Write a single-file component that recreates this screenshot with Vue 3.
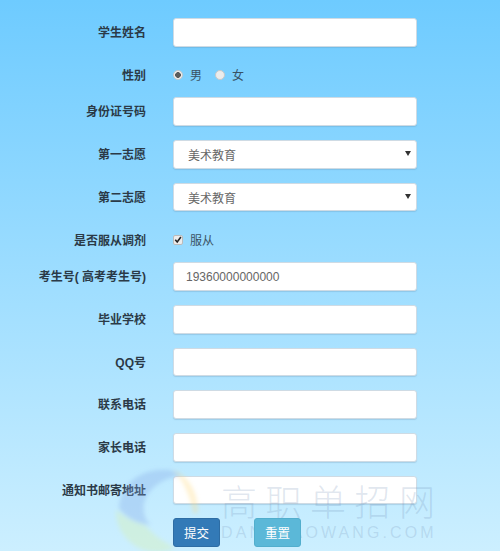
<script setup>
const topRows = [
  { label: '学生姓名', type: 'text' },
  { label: '性别', type: 'radio' },
  { label: '身份证号码', type: 'text' },
  { label: '第一志愿', type: 'select' },
  { label: '第二志愿', type: 'select' },
  { label: '是否服从调剂', type: 'check' },
  { label: '考生号( 高考考生号)', type: 'text', value: '19360000000000' },
  { label: '毕业学校', type: 'text' },
  { label: 'QQ号', type: 'text' },
  { label: '联系电话', type: 'text' },
  { label: '家长电话', type: 'text' },
  { label: '通知书邮寄地址', type: 'text' }
]
</script>

<template>
  <div class="page">
    <form class="form" @submit.prevent>
      <div v-for="row in topRows" :key="row.label" class="row" :class="{ short: row.type === 'radio' || row.type === 'check' }">
        <label class="label">{{ row.label }}</label>
        <div class="control">
          <input v-if="row.type === 'text'" class="field" type="text" :value="row.value || ''" />
          <div v-else-if="row.type === 'select'" class="field select">
            <span>美术教育</span>
            <i class="caret"></i>
          </div>
          <div v-else-if="row.type === 'radio'" class="choices">
            <span class="radio on"></span><span class="opt">男</span>
            <span class="radio"></span><span class="opt">女</span>
          </div>
          <div v-else class="choices">
            <span class="check">
              <svg viewBox="0 0 10 10" width="9" height="9"><path d="M1.6 5.2 L4 8 L8.6 1.8" fill="none" stroke="#222" stroke-width="2" /></svg>
            </span>
            <span class="opt">服从</span>
          </div>
        </div>
      </div>
      <div class="actions">
        <button class="btn primary" type="button">提交</button>
        <button class="btn info" type="button">重置</button>
      </div>
    </form>

    <div class="mark" aria-hidden="true">
      <svg class="mark-logo" viewBox="0 0 90 90" width="90" height="90">
        <defs>
          <filter id="soft" x="-10%" y="-10%" width="120%" height="120%"><feGaussianBlur stdDeviation="2" /></filter>
        </defs>
        <g filter="url(#soft)">
          <path d="M3 45 A41 41 0 0 0 62 83 C50 76 40 70 32 60 C22 58 12 52 3 45 Z" fill="#d3f0c8" opacity="0.55" />
          <path d="M6 44 C6 20 28 2 56 5 C62 6 66 8 68 11 C48 12 28 28 31 47 C32 53 34 57 38 60 C26 60 14 54 6 44 Z" fill="#7fa6e6" opacity="0.32" />
          <path d="M60 5 C74 10 85 26 85 46 C84 48 82 50 80 47 C78 34 72 20 66 12 Z" fill="#ffd97c" opacity="0.34" />
        </g>
      </svg>
      <div class="mark-text">
        <div class="mark-cn">高职单招网</div>
        <div class="mark-en">DANZHAOWANG.COM</div>
      </div>
    </div>
  </div>
</template>

<style scoped>
.page {
  position: relative;
  width: 500px;
  height: 551px;
  overflow: hidden;
  background: linear-gradient(180deg, #6ecbff 0%, #ccefff 100%);
  font-family: "Liberation Sans", "Noto Sans CJK SC", sans-serif;
  font-size: 12px;
  color: #333;
}
.form {
  display: flex;
  flex-direction: column;
  gap: 14.2px;
  padding-top: 18px;
}
.row {
  display: flex;
  height: 28.5px;
}
.row.short {
  height: 22.6px;
}
.label {
  width: 146px;
  box-sizing: border-box;
  padding-top: 1px;
  text-align: right;
  font-weight: 700;
  line-height: 28.5px;
  color: #2b3a47;
  flex: none;
}
.row.short .label {
  line-height: 22.6px;
  padding-top: 4px;
}
.control {
  margin-left: 27px;
  width: 243.5px;
}
.field {
  box-sizing: border-box;
  display: block;
  width: 100%;
  height: 28.5px;
  margin: 0;
  padding: 0 12px;
  border: 1px solid #cfdbe4;
  border-radius: 3px;
  background: #fff;
  font: inherit;
  color: #666;
  box-shadow: 0 1px 1px rgba(90, 130, 160, 0.25);
  outline: none;
}
.select {
  display: flex;
  align-items: center;
  justify-content: space-between;
  padding: 0 5px 0 14px;
}
.caret {
  width: 0;
  height: 0;
  margin-top: -2px;
  border-left: 3px solid transparent;
  border-right: 3px solid transparent;
  border-top: 5px solid #333;
}
.choices {
  display: flex;
  align-items: center;
  height: 22.6px;
  padding-top: 3px;
  box-sizing: content-box;
  color: #3a5264;
}
.radio {
  box-sizing: border-box;
  width: 10px;
  height: 10px;
  border-radius: 50%;
  background: #ececec;
  border: 1px solid #c9c9c9;
}
.radio.on {
  background: radial-gradient(circle, #5b5b5b 0 2.6px, #efefef 3.1px);
}
.opt {
  margin-left: 7px;
  margin-right: 13px;
}
.check {
  box-sizing: border-box;
  display: flex;
  align-items: center;
  justify-content: center;
  width: 10px;
  height: 10px;
  background: #ececec;
  border: 1px solid #bbb;
  border-radius: 2px;
}
.actions {
  position: relative;
  z-index: 1;
  display: flex;
  gap: 34px;
  margin-left: 173px;
}
.btn {
  box-sizing: border-box;
  width: 47px;
  height: 29px;
  padding: 0;
  border: 1px solid transparent;
  border-radius: 3px;
  color: #fff;
  font: inherit;
  font-size: 12.5px;
}
.primary {
  background: #337ab7;
  border-color: #2e6da4;
}
.info {
  background: #5bb8d8;
  border-color: #52aecd;
}
.mark {
  position: absolute;
  left: 113px;
  top: 465px;
  display: flex;
  pointer-events: none;
}
.mark-logo {
  flex: none;
}
.mark-text {
  margin-left: 18px;
  margin-top: 9.5px;
  color: rgba(100, 130, 170, 0.2);
}
.mark-cn {
  font-size: 36px;
  line-height: 50px;
  letter-spacing: 8.5px;
  white-space: nowrap;
  font-family: "Noto Sans CJK SC", sans-serif;
  font-weight: 300;
}
.mark-en {
  font-size: 16px;
  line-height: 18px;
  margin-top: -1px;
  letter-spacing: 3.1px;
  white-space: nowrap;
}
</style>
